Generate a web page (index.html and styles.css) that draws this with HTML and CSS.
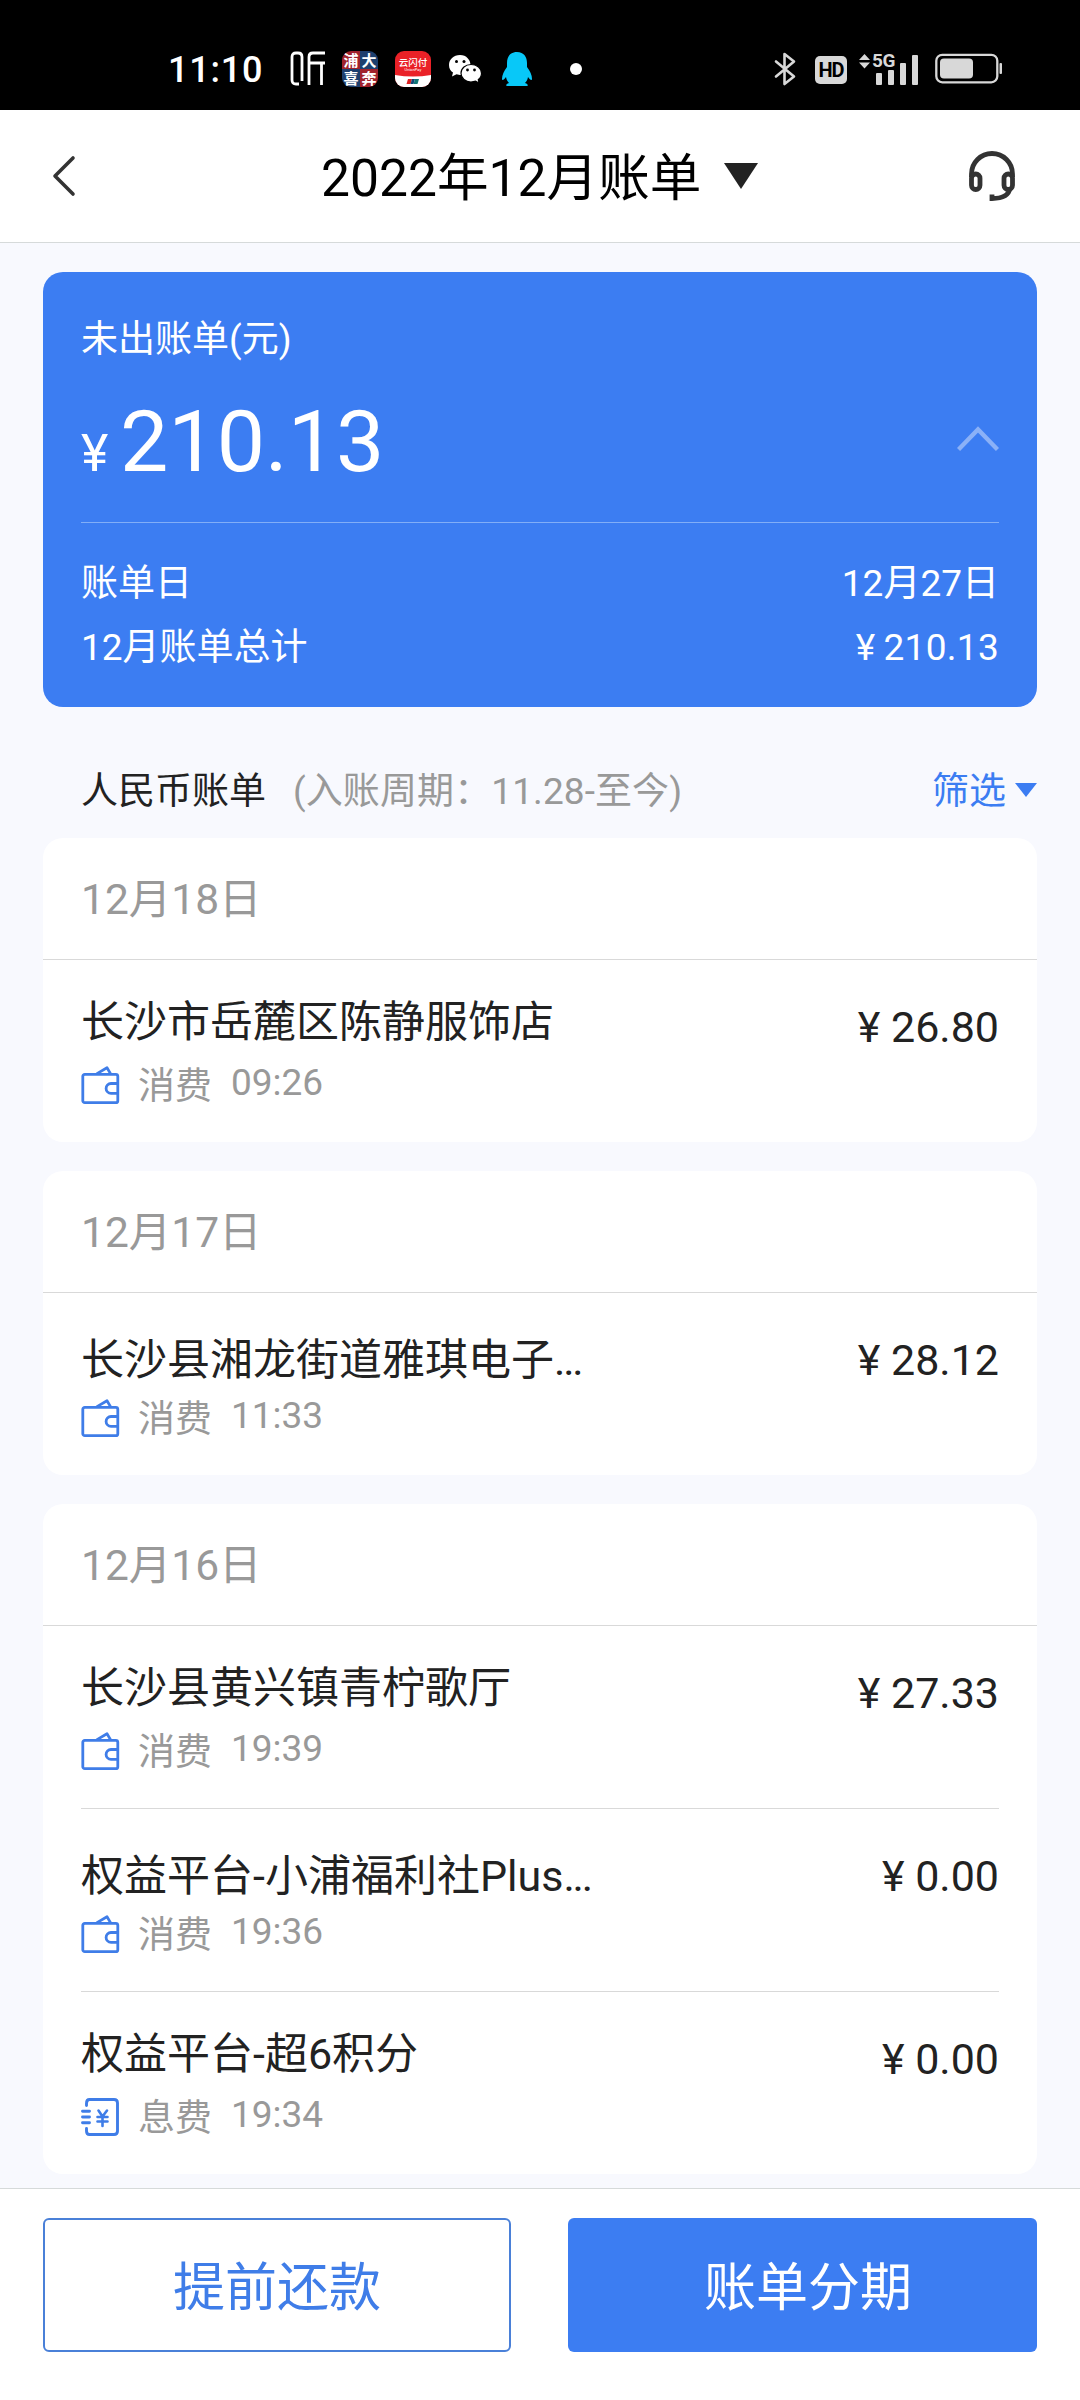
FILE: index.html
```html
<!DOCTYPE html>
<html lang="zh-CN">
<head>
<meta charset="utf-8">
<title>账单</title>
<link rel="stylesheet" href="styles.css">
</head>
<body>
<svg class="defs" width="0" height="0" aria-hidden="true">
  <symbol id="wallet" viewBox="0 0 40 42">
    <g fill="none" stroke="#3f7de8" stroke-width="2.8" stroke-linejoin="round" stroke-linecap="round">
      <rect x="1.800" y="9.300" width="35" height="28.400" rx="2"/>
      <path d="M16 8.600 L26 2.800 L29.500 8.600"/>
      <path d="M36.500 18.500 H30 A4.900 4.900 0 0 0 30 28.300 H36.500"/>
    </g>
  </symbol>
  <symbol id="ledger" viewBox="0 0 40 42">
    <g fill="none" stroke="#3f7de8" stroke-width="2.9" stroke-linecap="round" stroke-linejoin="round">
      <path d="M5.500 8.500 V6.500 Q5.500 2.500 8.500 2.500 H33 Q36.500 2.500 36.500 6 V34 Q36.500 37.500 33 37.500 H8.500 Q5.500 37.500 5.500 34 V31.500"/>
      <path d="M1.500 14.200 H8.500 M1.500 20 H8.500 M1.500 25.800 H8.500"/>
      <path d="M17.500 13.500 L21.500 19.500 L26 13.500 M21.500 19.500 V29 M16.500 20 H26.500 M16.500 24.500 H26.500" stroke-width="2.600"/>
    </g>
  </symbol>
</svg>

<div class="statusbar">
  <span class="clock">11:10</span>
  <svg class="ic-ting" width="36" height="36" viewBox="0 0 36 36" fill="none" stroke="#fff" stroke-width="2.8">
    <path d="M9 33 H6 Q2 33 2 29 V6 Q2 2 6 2 H8 Q12 2 12 6 V30 M35 2 H23 Q19 2 19 6 V34 M19 12 H35 M31.500 12 V34"/>
  </svg>
  <span class="app app-pd"><i>浦</i><i>大</i><i>喜</i><i>奔</i></span>
  <span class="app app-up"><b>云闪付</b><small>UnionPay</small>
    <svg width="36" height="12" viewBox="0 0 36 12"><path d="M0 0 Q18 3 36 0 V12 H0Z" fill="#fff"/><path d="M13 4h4l-1.500 5h-4z" fill="#d22"/><path d="M17 4h3l-1.500 5h-3z" fill="#147"/><path d="M20 4h4l-1.500 5h-4z" fill="#177"/></svg></span>
  <svg class="ic-wechat" width="34" height="30" viewBox="0 0 34 30">
    <path d="M12 1 C5.500 1 1 5.500 1 11 C1 14.500 2.500 17 5 18.500 L4 22.500 L8.500 20.300 L12 21 C18.500 21 22.500 16 22.500 11 S18.500 1 12 1Z" fill="#fff"/>
    <path d="M23 10.500 C17.500 10.500 13 14.300 13 19.200 S17.500 28 23 28 L27.500 27.200 L31 29 L30.300 25.500 C32.500 24 33.500 22 33.500 19.200 C33.500 14.300 29 10.500 23 10.500Z" fill="#fff" stroke="#000" stroke-width="1.200"/>
    <g fill="#000"><circle cx="8.500" cy="7.500" r="1.500"/><circle cx="16" cy="7.500" r="1.500"/><circle cx="19.500" cy="16" r="1.400"/><circle cx="26.500" cy="16" r="1.400"/></g>
  </svg>
  <svg class="ic-qq" width="32" height="36" viewBox="0 0 32 36" fill="#08c8f8">
    <path d="M16 1 C9 1 6 6 6 12 L6 16 C3 20 1 24 1 28 C1 30 3 29 5 26 C5.500 29 6.500 30.500 8 32 C5.500 32.500 5 34 5.500 35 H26.500 C27 34 26.500 32.500 24 32 C25.500 30.500 26.500 29 27 26 C29 29 31 30 31 28 C31 24 29 20 26 16 L26 12 C26 6 23 1 16 1Z"/>
  </svg>
  <span class="dot"></span>
  <svg class="ic-bt" width="22" height="34" viewBox="0 0 22 34" fill="none" stroke="#d8d8d8" stroke-width="2.600" stroke-linejoin="round" stroke-linecap="round">
    <path d="M2 9.500 L20 24.500 L10.500 32 V2 L20 9.500 L2 24.500"/>
  </svg>
  <span class="hd">HD</span>
  <span class="signal">
    <svg width="60" height="34" viewBox="0 0 60 34" fill="#d8d8d8">
      <path d="M0 8 L5.500 2 L11 8Z M0 10.500 H11 L5.500 16.500Z"/>
      <rect x="17" y="21" width="6" height="12" rx="1"/><rect x="29" y="18" width="6" height="15" rx="1"/><rect x="41" y="11" width="6" height="22" rx="1"/><rect x="53" y="3" width="6" height="30" rx="1"/>
    </svg>
    <span class="fiveg">5G</span>
  </span>
  <svg class="ic-batt" width="68" height="32" viewBox="0 0 68 32">
    <rect x="1.300" y="1.800" width="61" height="27.500" rx="6" fill="none" stroke="#d8d8d8" stroke-width="2.300"/>
    <rect x="5" y="5.500" width="33" height="20" rx="4" fill="#d8d8d8"/>
    <rect x="64.500" y="10" width="2.500" height="11" rx="1" fill="#d8d8d8"/>
  </svg>
</div>

<header class="navbar">
  <svg class="back" width="26" height="44" viewBox="0 0 26 44" fill="none" stroke="#333" stroke-width="3.600" stroke-linecap="round" stroke-linejoin="round"><path d="M22 4 L4 22 L22 40"/></svg>
  <h1 class="title">2022年12月账单</h1>
  <svg class="caret" width="34" height="26" viewBox="0 0 34 26"><path d="M0 0 H34 L17 26Z" fill="#222"/></svg>
  <svg class="headset" width="50" height="52" viewBox="0 0 50 52" fill="none" stroke="#333" stroke-width="4.800">
    <path d="M4.500 26 V23 A20.500 20.500 0 0 1 45.500 23 V26"/>
    <rect x="4.500" y="23" width="8.500" height="15.500" rx="4.250"/><rect x="37" y="23" width="8.500" height="15.500" rx="4.250"/>
    <path d="M43 37 C42 44 36 47.500 25 47.500 V43.500"/>
  </svg>
</header>

<main class="content">
  <section class="summary">
    <div class="summary-label">未出账单(元)</div>
    <div class="summary-main">
      <span class="yen">¥</span><span class="total">210.13</span>
      <svg class="up" width="42" height="26" viewBox="0 0 42 26" fill="none" stroke="#8bb1f7" stroke-width="4.400"><path d="M1.500 23.500 L21 3.500 L40.500 23.500"/></svg>
    </div>
    <div class="summary-row"><span>账单日</span><span>12月27日</span></div>
    <div class="summary-row"><span>12月账单总计</span><span class="sum"><span>¥</span><span>210.13</span></span></div>
  </section>

  <div class="listhead">
    <span class="lh-name">人民币账单</span>
    <span class="lh-period">(入账周期：11.28-至今)</span>
    <span class="filter">筛选</span>
    <svg class="filter-caret" width="22" height="14" viewBox="0 0 22 14"><path d="M0 0 H22 L11 14Z" fill="#3c7df2"/></svg>
  </div>

  <section class="card">
    <div class="date">12月18日</div>
    <div class="entry">
      <div class="info"><div class="name">长沙市岳麓区陈静服饰店</div>
        <div class="meta"><svg class="mi"><use href="#wallet"/></svg><span class="kind">消费</span><span class="time">09:26</span></div></div>
      <div class="amount">¥ 26.80</div>
    </div>
  </section>

  <section class="card">
    <div class="date">12月17日</div>
    <div class="entry">
      <div class="info"><div class="name clipped">长沙县湘龙街道雅琪电子<span class="dots">...</span></div>
        <div class="meta"><svg class="mi"><use href="#wallet"/></svg><span class="kind">消费</span><span class="time">11:33</span></div></div>
      <div class="amount">¥ 28.12</div>
    </div>
  </section>

  <section class="card">
    <div class="date">12月16日</div>
    <div class="entry">
      <div class="info"><div class="name">长沙县黄兴镇青柠歌厅</div>
        <div class="meta"><svg class="mi"><use href="#wallet"/></svg><span class="kind">消费</span><span class="time">19:39</span></div></div>
      <div class="amount">¥ 27.33</div>
    </div>
    <div class="entry">
      <div class="info"><div class="name clipped">权益平台-小浦福利社Plus<span class="dots">...</span></div>
        <div class="meta"><svg class="mi"><use href="#wallet"/></svg><span class="kind">消费</span><span class="time">19:36</span></div></div>
      <div class="amount">¥ 0.00</div>
    </div>
    <div class="entry">
      <div class="info"><div class="name">权益平台-超6积分</div>
        <div class="meta"><svg class="mi"><use href="#ledger"/></svg><span class="kind">息费</span><span class="time">19:34</span></div></div>
      <div class="amount">¥ 0.00</div>
    </div>
  </section>
</main>

<footer class="actions">
  <button class="btn btn-line">提前还款</button>
  <button class="btn btn-fill">账单分期</button>
</footer>
</body>
</html>
```
FILE: styles.css
```css
* { box-sizing: border-box; margin: 0; padding: 0; }
body {
  width: 1080px; height: 2400px; overflow: hidden;
  display: flex; flex-direction: column;
  background: #f8f9fe; color: #222;
  font-family: Roboto, "Noto Sans CJK SC", sans-serif;
  font-size: 37px; font-weight: 400;
}
svg { display: block; flex: none; }
.defs { position: absolute; }

.statusbar {
  height: 110px; background: #000; color: #fff; flex: none;
  display: flex; align-items: center; padding: 28px 0 0 168px;
}
.clock { font-size: 36px; font-weight: 500; letter-spacing: .8px; width: 122px; line-height: 40px; margin-top: 2px; }
.ic-ting { margin-right: 16px; }
.app { width: 36px; height: 36px; border-radius: 9px; flex: none; }
.app-pd {
  display: grid; grid-template-columns: 18px 18px; grid-template-rows: 18px 18px;
  background: conic-gradient(#1d3f6e 25%, #a0222c 0 50%, #1d3f6e 0 75%, #a0222c 0);
  margin-right: 17px;
}
.app-pd i { font: 700 15px/18px "Noto Sans CJK SC", sans-serif; text-align: center; }
.app-up { background: #ea2127; display: flex; flex-direction: column; align-items: center; margin-right: 17px; overflow: hidden; }
.app-up b { font: 500 9.500px/10px "Noto Sans CJK SC", sans-serif; margin-top: 6px; }
.app-up small { font: 4px/5px Roboto, sans-serif; margin-bottom: 3px; }
.ic-wechat { margin-right: 19px; }
.ic-qq { margin-right: 37px; }
.dot { width: 12px; height: 12px; border-radius: 50%; background: #fff; margin-right: 192px; }
.ic-bt { margin-right: 19px; }
.hd {
  width: 32px; height: 28px; border-radius: 5px; background: #d8d8d8; color: #000;
  font: 700 20px/29px Roboto, sans-serif; letter-spacing: -1px; text-align: center;
  margin: 2px 12px 0 0;
}
.signal { position: relative; margin-right: 16px; }
.fiveg { position: absolute; left: 13px; top: 0; font: 700 19px/18px Roboto, sans-serif; letter-spacing: -.5px; color: #d8d8d8; }

.navbar {
  height: 133px; flex: none; background: #fff; border-bottom: 1px solid #d6dada;
  display: flex; align-items: center; padding: 0 63px 0 51px;
}
.title { font-size: 51.6px; font-weight: 400; color: #000; margin-left: 244px; width: 382px; white-space: nowrap; line-height: 60px; padding-top: 6px; }
.caret { margin-left: 21px; }
.headset { margin-left: auto; margin-top: 2px; }

.content { flex: 1; min-height: 0; padding: 29px 43px 0; }
.summary {
  height: 435px; border-radius: 20px; background: #3c7df2; color: #fff;
  padding: 44px 38px 0;
}
.summary-label { line-height: 48px; }
.summary-main {
  height: 159px; border-bottom: 1px solid #82aef7; margin-bottom: 29px;
  display: flex; align-items: baseline; padding-top: 27px;
}
.yen { font-size: 52px; width: 39px; }
.total { font-size: 86px; line-height: 102px; }
.up { margin-left: auto; align-self: flex-start; margin-top: 35px; }
.summary-row { display: flex; justify-content: space-between; line-height: 64px; }
.sum { display: flex; gap: 8px; letter-spacing: .3px; }

.listhead { height: 131px; display: flex; align-items: center; padding: 30px 0 0 38px; }
.lh-period { color: #999; margin-left: 27px; letter-spacing: .1px; }
.filter { color: #3c7df2; margin-left: auto; }
.filter-caret { margin: 4px 0 0 9px; }

.card { background: #fff; border-radius: 20px; margin-bottom: 29px; }
.date { height: 122px; border-bottom: 1px solid #d9d9d9; padding-left: 38px; line-height: 124px; font-size: 42.5px; color: #999; }
.entry { height: 183px; margin: 0 38px; display: flex; justify-content: space-between; }
.card .date + .entry { height: 182px; }
.entry + .entry { border-top: 1px solid #d9d9d9; }
.name { font-size: 43px; line-height: 60px; margin-top: 32px; }
.name.clipped { margin-top: 37px; }
.dots { letter-spacing: -2.200px; }
.clipped + .meta { margin-top: 5px; }
.meta { display: flex; align-items: center; height: 48px; margin-top: 10px; color: #999; }
.mi { width: 40px; height: 42px; }
.kind { margin: 1px 0 0 17px; line-height: 48px; }
.time { margin: -6px 0 0 19px; line-height: 48px; }
.amount { font-size: 43px; line-height: 60px; margin-top: 37px; }

.actions {
  height: 212px; flex: none; background: #fff; border-top: 1px solid #d6dada;
  display: grid; grid-template-columns: 468px 469px; column-gap: 57px; padding: 29px 43px 0;
}
.btn { height: 134px; border-radius: 6px; padding-top: 7px; font: 400 52px/60px Roboto, "Noto Sans CJK SC", sans-serif; }
.btn-line { background: #fff; border: 2px solid #4a80d8; color: #3f7de8; }
.btn-fill { background: #3c7df2; border: 0; color: #fff; padding-left: 11px; }
```
